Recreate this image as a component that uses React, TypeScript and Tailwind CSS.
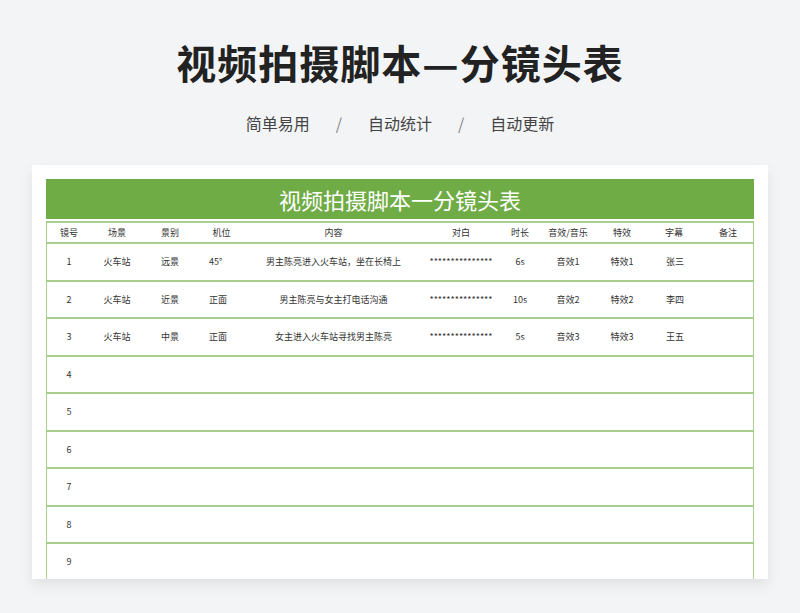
const cols = [
  { w: 44, h: "镜号" },
  { w: 52, h: "场景" },
  { w: 54, h: "景别" },
  { w: 49, h: "机位", left: true },
  { w: 175, h: "内容" },
  { w: 80, h: "对白" },
  { w: 38, h: "时长" },
  { w: 58, h: "音效/音乐" },
  { w: 50, h: "特效" },
  { w: 54, h: "字幕", left: true },
  { w: 54, h: "备注" },
];
const data = [
  ["1", "火车站", "远景", "45°", "男主陈亮进入火车站，坐在长椅上", "***************", "6s", "音效1", "特效1", "张三", ""],
  ["2", "火车站", "近景", "正面", "男主陈亮与女主打电话沟通", "***************", "10s", "音效2", "特效2", "李四", ""],
  ["3", "火车站", "中景", "正面", "女主进入火车站寻找男主陈亮", "***************", "5s", "音效3", "特效3", "王五", ""],
];
for (let i = 4; i <= 9; i++) data.push([String(i), "", "", "", "", "", "", "", "", "", ""]);

export default function App() {
  return (
    <div className="w-[800px] h-[613px] bg-[#f3f4f6] flex flex-col items-center overflow-hidden" style={{ fontFamily: '"Noto Sans CJK SC", sans-serif' }}>
      <h1 className="mt-[35px] text-[40px] leading-[54px] font-bold text-[#222] tracking-[1px]">视频拍摄脚本—分镜头表</h1>
      <div className="mt-[22px] flex gap-[26px] text-[16px] text-[#444] leading-[24px]">
        <span>简单易用</span><span className="text-[#888]">/</span><span>自动统计</span><span className="text-[#888]">/</span><span>自动更新</span>
      </div>
      <div className="mt-[30px] w-[736px] h-[414px] bg-white shadow-[0_6px_12px_rgba(0,0,0,0.08)] px-[14px] pt-[14px] overflow-hidden">
        <div className="h-[40px] bg-[#6fac46] text-white text-[22px] flex items-center justify-center">视频拍摄脚本一分镜头表</div>
        <div className="mt-[2px] border-x border-t-2 border-[#a9cf8f] text-[9px] text-[#333]">
          <div className="flex h-[21px] items-center border-b-2 border-[#a9cf8f]">
            {cols.map((c, i) => (
              <div key={i} style={{ width: c.w }} className="text-center shrink-0">{c.h}</div>
            ))}
          </div>
          {data.map((r, ri) => (
            <div key={ri} className="flex h-[37.5px] items-center border-b-2 border-[#a9cf8f]">
              {r.map((v, i) => (
                <div key={i} style={{ width: cols[i].w }} className={"shrink-0 " + (cols[i].left ? (i === 3 ? "pl-[12px]" : "pl-[19px]") : "text-center")}>{v}</div>
              ))}
            </div>
          ))}
        </div>
      </div>
    </div>
  );
}
